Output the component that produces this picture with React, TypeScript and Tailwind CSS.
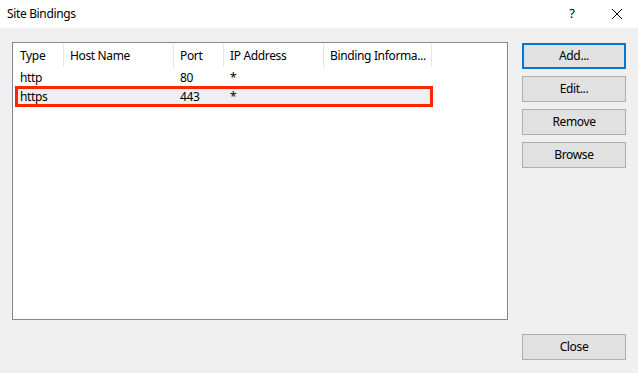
const font = { fontFamily: '"Segoe UI", "Noto Sans", sans-serif' };

const columns = [
  { label: "Type", width: "w-[51px] pl-[7px]" },
  { label: "Host Name", width: "w-[110px] pl-[6px]" },
  { label: "Port", width: "w-[50px] pl-[6px]" },
  { label: "IP Address", width: "w-[100px] pl-[6px]" },
  { label: "Binding Informa...", width: "w-[108px] pl-[6px]" },
];

const rows = [
  { type: "http", port: "80", ip: "*", selected: false },
  { type: "https", port: "443", ip: "*", selected: true },
];

function DialogButton({ label, focused }: { label: string; focused?: boolean }) {
  return (
    <button
      className={
        "h-[26px] w-[104px] bg-[#e1e1e1] text-black " +
        (focused ? "border-2 border-[#0078d7]" : "border border-[#adadad]")
      }
    >
      {label}
    </button>
  );
}

export default function App() {
  return (
    <div
      className="flex h-[373px] w-[638px] flex-col bg-[#f0f0f0] text-[12px] tracking-[-0.35px] text-black"
      style={font}
    >
      {/* title bar */}
      <div className="flex h-[28px] items-center bg-white pl-[7px]">
        <span className="flex-1">Site Bindings</span>
        <span className="w-[20px] text-center text-[13px]">?</span>
        <span className="ml-[27px] mr-[13px] flex w-[16px] justify-center">
          <svg width="12" height="12" viewBox="0 0 12 12">
            <path d="M1 1 L11 11 M11 1 L1 11" stroke="#000" strokeWidth="1" />
          </svg>
        </span>
      </div>

      <div className="flex flex-1 px-[12px] pt-[14px] pb-[13px]">
        <div className="flex h-[278px] w-[496px] flex-col border border-[#828790] bg-white">
          <div className="flex h-[25px]">
            {columns.map((c) => (
              <div key={c.label} className={"flex items-center " + c.width}>
                <span className="flex-1 whitespace-nowrap">{c.label}</span>
                <span className="mt-[1px] h-[23px] w-px self-start bg-[#e5e5e5]" />
              </div>
            ))}
          </div>
          <div className="flex flex-col">
            {rows.map((r) => (
              <div
                key={r.type}
                className={
                  "ml-[3px] flex h-[19px] w-[416px] items-center pl-[4px] " +
                  (r.selected
                    ? "bg-[#efefef] outline-[3px] outline-offset-[-2px] outline-[#ff2600]"
                    : "")
                }
              >
                <span className="w-[160px]">{r.type}</span>
                <span className="w-[50px]">{r.port}</span>
                <span className="w-[100px]">{r.ip}</span>
              </div>
            ))}
          </div>
        </div>

        <div className="ml-[14px] flex flex-col justify-between">
          <div className="flex flex-col gap-[7px] pt-[1px]">
            <DialogButton label="Add..." focused />
            <DialogButton label="Edit..." />
            <DialogButton label="Remove" />
            <DialogButton label="Browse" />
          </div>
          <DialogButton label="Close" />
        </div>
      </div>
    </div>
  );
}
